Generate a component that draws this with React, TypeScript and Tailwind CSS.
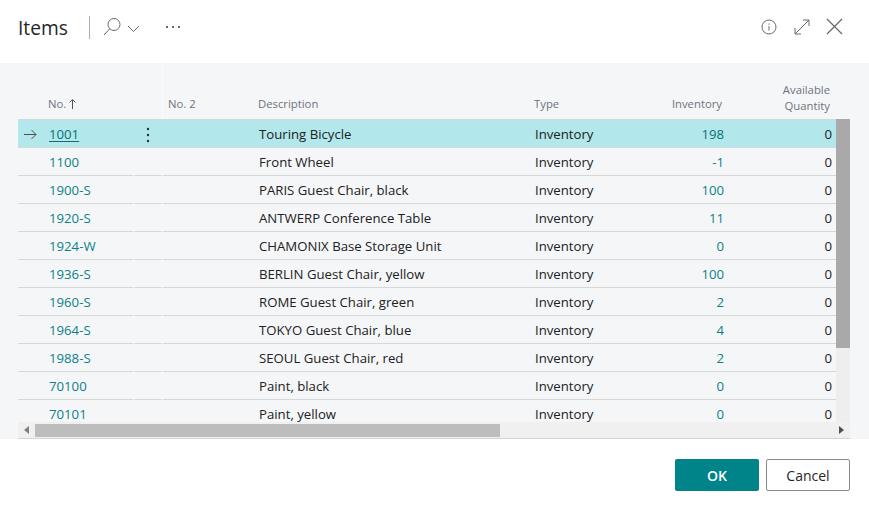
import React from "react";

const rows: [string, string, string][] = [
  ["1001", "Touring Bicycle", "198"],
  ["1100", "Front Wheel", "-1"],
  ["1900-S", "PARIS Guest Chair, black", "100"],
  ["1920-S", "ANTWERP Conference Table", "11"],
  ["1924-W", "CHAMONIX Base Storage Unit", "0"],
  ["1936-S", "BERLIN Guest Chair, yellow", "100"],
  ["1960-S", "ROME Guest Chair, green", "2"],
  ["1964-S", "TOKYO Guest Chair, blue", "4"],
  ["1988-S", "SEOUL Guest Chair, red", "2"],
  ["70100", "Paint, black", "0"],
  ["70101", "Paint, yellow", "0"],
];

function Row({ no, desc, inv, selected }: { no: string; desc: string; inv: string; selected: boolean }) {
  return (
    <div className={`flex h-[28px] shrink-0 gap-px text-[13.2px] ${selected ? "bg-[#b2e8eb]" : ""}`}>
      <div className="flex w-[115px] items-center border-b border-[#d6d7d9] pt-[2px]">
        <div className="flex w-[31px] justify-center pr-[7px]">
          {selected && (
            <svg width="13" height="11" viewBox="0 0 13 11" fill="none" stroke="#505050" strokeWidth="1">
              <path d="M0 5.5H12M7.5 1l4.5 4.5L7.5 10" />
            </svg>
          )}
        </div>
        <span className={selected ? "text-[#0b6f75] underline underline-offset-2" : "text-[#0b8087]"}>{no}</span>
      </div>
      <div className="flex w-[28px] items-center justify-center border-b border-[#d6d7d9] pt-[2px]">
        {selected && (
          <svg width="4" height="16" viewBox="0 0 4 16" fill="#303030">
            <circle cx="2" cy="2" r="1.2" />
            <circle cx="2" cy="8" r="1.2" />
            <circle cx="2" cy="14" r="1.2" />
          </svg>
        )}
      </div>
      <div className="flex flex-1 items-center border-b border-[#d6d7d9] pt-[2px]">
        <span className="w-[96px] shrink-0" />
        <span className="w-[276px] shrink-0 text-[#212121]">{desc}</span>
        <span className="w-[100px] shrink-0 text-[#212121]">Inventory</span>
        <span className={`w-[89px] shrink-0 text-right ${selected ? "text-[#0b6f75]" : "text-[#0b8087]"}`}>{inv}</span>
        <span className="w-[108px] shrink-0 text-right text-[#212121]">0</span>
      </div>
    </div>
  );
}

export default function App() {
  return (
    <div className="flex h-[509px] w-[869px] flex-col overflow-hidden bg-white font-['Open_Sans','Noto_Sans',sans-serif]">
      <header className="flex h-[63px] shrink-0 items-center pl-[18px] pr-[26px] pb-[8px]">
        <h1 className="w-[50px] whitespace-nowrap text-[19.2px] font-normal leading-none text-[#262626]">Items</h1>
        <div className="ml-[21px] h-[23px] w-px bg-[#b0b0b0]" />
        <svg className="ml-[13px] -mt-[1px]" width="18" height="18" viewBox="0 0 18 18" fill="none" stroke="#6a6a6a" strokeWidth="1">
          <circle cx="11" cy="6.5" r="6" />
          <path d="M6.7 10.8 L1 17" />
        </svg>
        <svg className="ml-[6px] mt-[2px]" width="13" height="8" viewBox="0 0 13 8" fill="none" stroke="#6a6a6a" strokeWidth="1">
          <path d="M1 1l5.5 5.5L12 1" />
        </svg>
        <div className="ml-[26px] flex gap-[4px] pb-[2px]">
          <span className="h-[2px] w-[2px] bg-[#6a6a6a]" />
          <span className="h-[2px] w-[2px] bg-[#6a6a6a]" />
          <span className="h-[2px] w-[2px] bg-[#6a6a6a]" />
        </div>
        <div className="flex-1" />
        <svg className="-mt-[2px]" width="16" height="16" viewBox="0 0 16 16" fill="none" stroke="#6a6a6a" strokeWidth="1">
          <circle cx="8" cy="8" r="7" />
          <path d="M8 7v4.5M8 4.5v1.2" />
        </svg>
        <svg className="ml-[17px] -mt-[2px]" width="16" height="16" viewBox="0 0 16 16" fill="none" stroke="#6a6a6a" strokeWidth="1">
          <path d="M1 15L15 1M9 1h6v6M1 9v6h6" />
        </svg>
        <svg className="ml-[16px] -mt-[2px]" width="17" height="17" viewBox="0 0 17 17" fill="none" stroke="#6a6a6a" strokeWidth="1.3">
          <path d="M1 1l15 15M16 1L1 16" />
        </svg>
      </header>

      <main className="flex h-[376px] shrink-0 flex-col bg-[#f5f6f8] pl-[18px] pr-[19px]">
        <div className="flex h-[56px] shrink-0 text-[11.3px] leading-[16px] text-[#6d737d]">
          <span className="ml-[30px] flex w-[115px] items-end border-r border-[#f9fafb] pb-[7px]">
            <span className="flex items-center gap-[3px]">
              No.
              <svg width="7" height="10" viewBox="0 0 7 10" fill="none" stroke="#555" strokeWidth="1">
                <path d="M3.5 10V1M0.5 3.5l3-3 3 3" />
              </svg>
            </span>
          </span>
          <span className="ml-[5px] flex w-[90px] items-end pb-[7px]">No. 2</span>
          <span className="flex w-[276px] items-end pb-[7px]">Description</span>
          <span className="flex w-[100px] items-end pb-[7px]">Type</span>
          <span className="flex w-[88px] items-end justify-end pb-[7px]">Inventory</span>
          <span className="flex w-[108px] items-end justify-end pb-[5px] text-right">
            <span>
              Available
              <br />
              Quantity
            </span>
          </span>
        </div>
        <div className="flex h-[303px] shrink-0 overflow-hidden">
          <div className="flex w-[818px] shrink-0 flex-col border-t border-[#d6d7d9]">
            {rows.map((r, i) => (
              <Row key={r[0]} no={r[0]} desc={r[1]} inv={r[2]} selected={i === 0} />
            ))}
          </div>
          <div className="w-[14px] shrink-0 bg-[#eeeeee]">
            <div className="h-[229px] bg-[#a9a9a9]" />
          </div>
        </div>
        <div className="flex h-[17px] shrink-0 items-center border-b border-[#d4d4d4] bg-[#f0f0f0]">
          <svg className="ml-[6px]" width="5" height="8" viewBox="0 0 5 8" fill="#808080">
            <path d="M5 0v8L0 4z" />
          </svg>
          <div className="ml-[6px] h-[13px] w-[465px] bg-[#bdbdbd]" />
          <div className="flex-1" />
          <svg className="mr-[6px]" width="5" height="8" viewBox="0 0 5 8" fill="#505050">
            <path d="M0 0v8l5-4z" />
          </svg>
        </div>
      </main>

      <footer className="flex flex-1 items-start justify-end gap-[7px] pr-[19px] pt-[20px]">
        <button className="h-[32px] w-[84px] rounded-[2px] bg-[#008489] text-[14px] font-semibold text-white">OK</button>
        <button className="h-[32px] w-[84px] rounded-[2px] border border-[#8a8a8a] bg-white text-[14px] text-[#262626]">Cancel</button>
      </footer>
    </div>
  );
}
